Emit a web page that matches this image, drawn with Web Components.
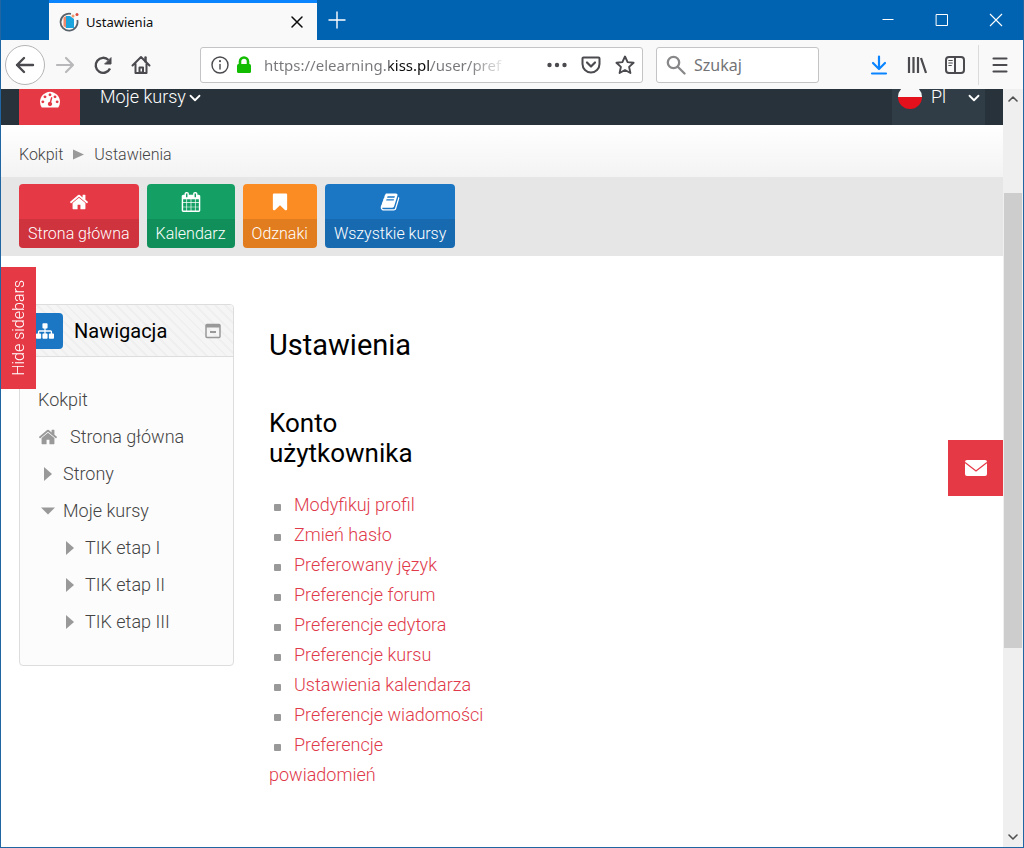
<!DOCTYPE html>
<html lang="pl">
<head>
<meta charset="utf-8">
<title>Ustawienia</title>
<style>
  html, body { margin: 0; }
  body { font-family: Roboto, "Liberation Sans", sans-serif; font-weight: 300; color: #333; }
</style>
</head>
<body>
<browser-window>
  <tab-strip slot="tabs">Ustawienia</tab-strip>
  <browser-toolbar slot="toolbar"></browser-toolbar>

  <site-header><span slot="menu">Moje kursy</span><span slot="lang">Pl</span></site-header>
  <bread-crumbs><a href="#kokpit" slot="parent">Kokpit</a>Ustawienia</bread-crumbs>
  <quick-links>
    <quick-tile icon="home" href="#home" style="--tile:#e63946">Strona główna</quick-tile>
    <quick-tile icon="calendar" href="#calendar" style="--tile:#14a065">Kalendarz</quick-tile>
    <quick-tile icon="bookmark" href="#badges" style="--tile:#fb8c23">Odznaki</quick-tile>
    <quick-tile icon="book" href="#courses" style="--tile:#1b76c4">Wszystkie kursy</quick-tile>
  </quick-links>
  <page-columns>
    <nav-block slot="side">
      <span slot="title">Nawigacja</span>
      <tree-item kind="plain">Kokpit</tree-item>
      <tree-item kind="home">Strona główna</tree-item>
      <tree-item kind="closed">Strony</tree-item>
      <tree-item kind="open">Moje kursy</tree-item>
      <tree-item kind="closed" nested>TIK etap I</tree-item>
      <tree-item kind="closed" nested>TIK etap II</tree-item>
      <tree-item kind="closed" nested>TIK etap III</tree-item>
    </nav-block>
    <settings-panel>
      <span slot="title">Ustawienia</span>
      <span slot="group">Konto użytkownika</span>
      <settings-link href="#profile">Modyfikuj profil</settings-link>
      <settings-link href="#password">Zmień hasło</settings-link>
      <settings-link href="#language">Preferowany język</settings-link>
      <settings-link href="#forum">Preferencje forum</settings-link>
      <settings-link href="#editor">Preferencje edytora</settings-link>
      <settings-link href="#course">Preferencje kursu</settings-link>
      <settings-link href="#calendar-settings">Ustawienia kalendarza</settings-link>
      <settings-link href="#messages">Preferencje wiadomości</settings-link>
      <settings-link href="#notifications">Preferencje powiadomień</settings-link>
    </settings-panel>
  </page-columns>
  <sidebar-toggle slot="overlay">Hide sidebars</sidebar-toggle>
  <mail-button slot="overlay"></mail-button>
</browser-window>

<script>
const define = (name, html, setup) => {
  const template = document.createElement('template');
  template.innerHTML = `<style>
    *, ::before, ::after { box-sizing: border-box; }
    :host { display: block; box-sizing: border-box; }
    button { border: 0; padding: 0; margin: 0; background: none; font: inherit; color: inherit; display: flex; align-items: center; justify-content: center; }
    a { color: inherit; text-decoration: none; }
    svg { display: block; flex: none; }
  </style>` + html;
  customElements.define(name, class extends HTMLElement {
    constructor() {
      super();
      this.attachShadow({ mode: 'open' }).append(template.content.cloneNode(true));
    }
    connectedCallback() { if (setup) setup(this, this.shadowRoot); }
  });
};

/* Icon set. Filled glyphs use a 1792 grid. */
const fa = d => `<svg viewBox="0 0 1792 1792" fill="currentColor"><path d="${d}"/></svg>`;
const line = (body, w = 2, box = 20) => `<svg viewBox="0 0 ${box} ${box}" fill="none" stroke="currentColor" stroke-width="${w}" stroke-linecap="round" stroke-linejoin="round">${body}</svg>`;
const ICONS = {
  home: fa('M1472 992v480q0 26-19 45t-45 19h-384v-384h-256v384h-384q-26 0-45-19t-19-45v-480q0-1 .5-3t.5-3l575-474 575 474q1 2 1 6zm223-69l-62 74q-8 9-21 11h-3q-13 0-21-7l-692-577-692 577q-12 8-24 7-13-2-21-11l-62-74q-8-10-7-23.500t11-21.500l719-599q32-26 76-26t76 26l244 204v-195q0-14 9-23t23-9h192q14 0 23 9t9 23v408l219 182q10 8 11 21.500t-7 23.500z'),
  calendar: fa('M192 1664h288v-288h-288v288zm352 0h320v-288h-320v288zm-352-352h288v-320h-288v320zm352 0h320v-320h-320v320zm-352-384h288v-288h-288v288zm736 736h320v-288h-320v288zm-384-736h320v-288h-320v288zm768 736h288v-288h-288v288zm-384-352h320v-320h-320v320zm-352-864v-288q0-13-9.500-22.500t-22.500-9.500h-64q-13 0-22.500 9.500t-9.500 22.500v288q0 13 9.500 22.500t22.500 9.500h64q13 0 22.500-9.500t9.500-22.500zm736 864h288v-320h-288v320zm-384-384h320v-288h-320v288zm384 0h288v-288h-288v288zm32-480v-288q0-13-9.500-22.500t-22.500-9.500h-64q-13 0-22.500 9.500t-9.500 22.500v288q0 13 9.500 22.500t22.500 9.500h64q13 0 22.500-9.500t9.500-22.500zm384-64v1280q0 52-38 90t-90 38h-1408q-52 0-90-38t-38-90v-1280q0-52 38-90t90-38h128v-96q0-66 47-113t113-47h64q66 0 113 47t47 113v96h384v-96q0-66 47-113t113-47h64q66 0 113 47t47 113v96h128q52 0 90 38t38 90z'),
  bookmark: fa('M1420 128q23 0 44 9 33 13 52.500 41t19.500 62v1289q0 34-19.500 62t-52.500 41q-19 8-44 8-48 0-83-32l-441-424-441 424q-36 33-83 33-23 0-44-9-33-13-52.500-41t-19.500-62v-1289q0-34 19.500-62t52.500-41q21-9 44-9h1048z'),
  book: fa('M1703 478q40 57 18 129l-275 906q-19 64-76.500 107.500t-122.500 43.500h-923q-77 0-148.500-53.500t-99.500-131.500q-24-67-2-127 0-4 3-27t4-37q1-8-3-21.500t-3-19.500q2-11 8-21t16.500-23.500 16.500-23.500q23-38 45-91.500t30-91.500q3-10 .5-30t-.5-28q3-11 17-28t17-23q21-36 42-92t25-90q1-9-2.500-32t.5-28q4-13 22-30.500t22-22.500q19-26 42.500-84.500t27.500-96.500q1-8-3-25.500t-2-26.500q2-8 9-18t18-23 17-21q8-12 16.500-30.500t15-35 16-36 19.500-32 26.500-23.500 36-11.500 47.500 5.500l-1 3q38-9 51-9h761q74 0 114 56t18 130l-274 906q-36 119-71.500 153.500t-128.500 34.500h-869q-27 0-38 15-11 16-1 43 24 70 144 70h923q29 0 56-15.500t35-41.500l300-987q7-22 5-57 38 15 59 43zm-1064 2q-4 13 2 22.500t20 9.500h608q13 0 25.500-9.500t16.500-22.500l21-64q4-13-2-22.500t-20-9.500h-608q-13 0-25.500 9.500t-16.500 22.500zm-83 256q-4 13 2 22.500t20 9.500h608q13 0 25.500-9.500t16.500-22.500l21-64q4-13-2-22.500t-20-9.500h-608q-13 0-25.500 9.500t-16.500 22.500z'),
  gauge: fa('M384 1152q0-53-37.500-90.500t-90.500-37.500-90.500 37.500-37.500 90.500 37.500 90.500 90.500 37.500 90.500-37.500 37.500-90.500zm192-448q0-53-37.500-90.500t-90.500-37.500-90.500 37.500-37.500 90.500 37.500 90.500 90.500 37.500 90.500-37.500 37.500-90.500zm428 481l101-382q6-26-7.500-48.500t-38.500-29.500-48 6.500-30 39.500l-101 382q-60 5-107 43.500t-63 98.500q-20 77 20 146t117 89 146-20 89-117q16-60-6-117t-72-91zm660-33q0-53-37.500-90.500t-90.500-37.500-90.500 37.500-37.500 90.500 37.500 90.500 90.500 37.500 90.500-37.500 37.500-90.500zm-640-640q0-53-37.500-90.500t-90.500-37.500-90.500 37.500-37.500 90.500 37.500 90.500 90.500 37.500 90.500-37.500 37.500-90.500zm448 192q0-53-37.500-90.500t-90.500-37.500-90.500 37.500-37.500 90.500 37.500 90.500 90.500 37.500 90.500-37.500 37.500-90.500zm320 448q0 261-141 483-19 29-54 29h-1402q-35 0-54-29-141-221-141-483 0-182 71-348t191-286 286-191 348-71 348 71 286 191 191 286 71 348z'),
  sitemap: fa('M1792 1248v320q0 40-28 68t-68 28h-320q-40 0-68-28t-28-68v-320q0-40 28-68t68-28h96v-192h-512v192h96q40 0 68 28t28 68v320q0 40-28 68t-68 28h-320q-40 0-68-28t-28-68v-320q0-40 28-68t68-28h96v-192h-512v192h96q40 0 68 28t28 68v320q0 40-28 68t-68 28h-320q-40 0-68-28t-28-68v-320q0-40 28-68t68-28h96v-192q0-52 38-90t90-38h512v-192h-96q-40 0-68-28t-28-68v-320q0-40 28-68t68-28h320q40 0 68 28t28 68v320q0 40-28 68t-68 28h-96v192h512q52 0 90 38t38 90v192h96q40 0 68 28t28 68z'),
  mail: '<svg viewBox="0 0 22 18"><rect y="1" width="22" height="16" rx="2" fill="#fff"/><path d="M0 3.500L11 12L22 3.500" fill="none" stroke="#e63946" stroke-width="1.300"/></svg>',
  close: line('<path d="M5 5l10 10M15 5L5 15"/>', 1.5),
  plus: line('<path d="M10 2v16M2 10h16"/>', 1.4),
  minimize: line('<path d="M4.500 9.500h11" stroke-linecap="butt"/>', 1),
  maximize: line('<path d="M4.500 4.500h11v11h-11z" stroke-linejoin="miter"/>', 1),
  exit: line('<path d="M4 4l12 12M16 4L4 16" stroke-linecap="butt"/>', 1.1),
  back: line('<path d="M18 10H2M9 3L2 10l7 7"/>', 2.4),
  forward: line('<path d="M2 10h16M11 3l7 7-7 7"/>', 2.2),
  reload: line('<path d="M17 13.500A7.500 7.500 0 1 1 15.500 5" stroke-linecap="butt"/><path d="M18 3v6h-6z" fill="currentColor" stroke-width="1"/>', 2.4),
  house: line('<path d="M1.500 10.500L10 2l8.500 8.500M4.500 9v9h11V9"/><path d="M14.500 2.500v4" stroke-width="2.500"/><path d="M8.500 17.500v-5h3.500v5z"/>', 2),
  info: line('<circle cx="10" cy="10" r="8"/><path d="M10 9.500v4.500"/><path d="M10 6v.2" stroke-width="2"/>', 1.4),
  lock: '<svg viewBox="0 0 20 20"><path d="M6 10V6.500a4 4 0 0 1 8 0V10" fill="none" stroke="#12bc00" stroke-width="2.600"/><rect x="3" y="9" width="14" height="9" rx="1.500" fill="#12bc00"/></svg>',
  dots: '<svg viewBox="0 0 20 20" fill="currentColor"><circle cx="2.500" cy="10" r="2.200"/><circle cx="10" cy="10" r="2.200"/><circle cx="17.500" cy="10" r="2.200"/></svg>',
  pocket: line('<path d="M2.500 2.500h15a1 1 0 0 1 1 1V9a8.500 8.500 0 0 1-17 0V3.500a1 1 0 0 1 1-1z"/><path d="M6 7.500l4 4 4-4" stroke-width="2.200"/>'),
  star: line('<path d="M10 1.500l2.600 5.600 6 .7-4.500 4.100 1.300 6.100L10 15l-5.400 3 1.300-6.100L1.400 7.800l6-.7z"/>', 1.9),
  search: line('<circle cx="7.500" cy="7.500" r="5.700"/><path d="M12 12l6.500 6.500"/>', 2.3),
  download: line('<path d="M10 1.500v12M4 8l6 6 6-6M3 18.500h14"/>', 2.2),
  library: line('<path d="M2 2v16M6.500 2v16M11 2v16M14 3l5 15" stroke-linecap="butt"/>', 2.2),
  sidebar: line('<rect x="1" y="2" width="18" height="16" rx="3"/><path d="M10 2v16"/><path d="M3.800 5.500h3.500M3.800 8h3.500M3.800 10.500h2.500" stroke-width="1.100"/>'),
  menu: line('<path d="M3.500 3.500h13M3.500 10h13M3.500 16.500h13"/>', 2.1),
  down: line('<path d="M5 7.500l5 5 5-5"/>', 2),
  up: line('<path d="M5 12.500l5-5 5 5"/>', 2),
  right: '<svg viewBox="0 0 20 20" fill="currentColor"><path d="M6 3l8 7-8 7z"/></svg>',
  expanded: '<svg viewBox="0 0 20 20" fill="currentColor"><path d="M3 6.500h14L10 13.500z"/></svg>',
  crumb: '<svg viewBox="0 0 20 20" fill="currentColor"><path d="M0 1l20 9-20 9z"/></svg>',
  collapse: '<svg viewBox="0 0 16 16" fill="none" stroke="currentColor"><rect x="1" y="1.500" width="14" height="13" rx="1" stroke-width="1.500"/><path d="M1 3h14" stroke-width="3"/><path d="M5 9h6" stroke-width="1.800"/></svg>',
  flag: '<svg viewBox="0 4 24 20"><path d="M0 12a12 12 0 0 1 24 0z" fill="#f8f8f8"/><path d="M0 12a12 12 0 0 0 24 0z" fill="#e4101c"/></svg>',
  favicon: '<svg viewBox="0 0 20 20"><path d="M12 1.800A8.500 8.500 0 1 0 18.300 8" fill="none" stroke="#59616b" stroke-width="1.800"/><path d="M4.500 5.500l3-1.500v12l-3-2z" fill="#ef8a6c"/><path d="M7 4h4l4 3v9H7z" fill="#1ba4dd"/><circle cx="14" cy="4" r="1.500" fill="#f09a70"/><circle cx="18" cy="2.500" r="1.500" fill="#dd4c3c"/></svg>'
};
define('ui-icon', '<style>:host{width:20px;height:20px;flex:none}svg{width:100%;height:100%}</style>', (host, root) => {
  if (!root.querySelector('svg')) root.append(document.createRange().createContextualFragment(ICONS[host.getAttribute('name')]));
});

define('browser-window', `<style>
  :host { min-height: 100vh; display: flex; flex-direction: column; background: #fff; border: solid #1f66a3; border-width: 0 1px 1px; }
  .view { flex: 1; display: grid; grid-template-columns: 1fr 20px; }
  main { position: relative; min-width: 0; }
</style>
<slot name="tabs"></slot><slot name="toolbar"></slot>
<div class="view"><main><slot></slot><slot name="overlay"></slot></main><scroll-rail></scroll-rail></div>`);

define('tab-strip', `<style>
  :host { display: flex; height: 40px; background: #0063b1; color: #fff; font-family: "Noto Sans", "Open Sans", sans-serif; font-weight: 400; padding-left: 48px; }
  .tab { width: 268px; background: #f9f9fa; border-top: 3px solid #0a84ff; color: #0c0c0d; display: flex; align-items: center; gap: 7px; padding: 0 10px; font-size: 13px; }
  .label { flex: 1; }
  .new { width: 40px; }
  .window { margin-left: auto; display: flex; }
  .window button { width: 54px; }
</style>
<div class="tab"><ui-icon name="favicon"></ui-icon><span class="label"><slot></slot></span><button aria-label="Zamknij kartę"><ui-icon name="close"></ui-icon></button></div>
<button class="new" aria-label="Nowa karta"><ui-icon name="plus"></ui-icon></button>
<div class="window"><button aria-label="Minimalizuj"><ui-icon name="minimize"></ui-icon></button><button aria-label="Maksymalizuj"><ui-icon name="maximize"></ui-icon></button><button aria-label="Zamknij"><ui-icon name="exit"></ui-icon></button></div>`);

define('browser-toolbar', `<style>
  :host { display: flex; align-items: center; height: 49px; padding: 0 2px 0 4px; background: #f9f9fa; color: #4a4a4f; font-family: "Noto Sans", "Open Sans", sans-serif; font-weight: 400; }
  button { width: 38px; height: 40px; }
  .back { width: 40px; margin-right: 1px; border: 1px solid #b5b5b8; border-radius: 50%; background: #fff; }
  .forward { color: #b8b8ba; }
  .box { display: flex; align-items: center; height: 36px; background: #fff; border: 1px solid #c4c4c6; border-radius: 3px; }
  .url { flex: 1; margin: 0 13px 0 40px; padding: 0 0 0 9px; min-width: 0; }
  .url button { width: 34px; height: 34px; }
  .url > ui-icon { margin-right: 4px; }
  input { border: 0; outline: 0; padding: 0; font: inherit; font-size: 16px; min-width: 0; background: none; }
  .url input { flex: 1; margin: 0 36px 0 6px; font-size: 15px; color: transparent; -webkit-background-clip: text; background-clip: text;
    background-image: linear-gradient(90deg, #77777b 125px, #0c0c0d 125px, #0c0c0d 167px, #77777b 167px, #77777b 205px, transparent 244px); }
  .search { width: 163px; padding: 0 9px; gap: 8px; }
  .search ui-icon { color: #88888a; }
  .search input { flex: 1; width: 20px; }
  .search input::placeholder { color: #737376; opacity: 1; }
  .end { display: flex; margin-left: 41px; }
  .blue { color: #0a84ff; }
  .menu { width: 43px; border-left: 1px solid #dcdcde; margin-left: 4px; }
</style>
<button class="back" aria-label="Wstecz"><ui-icon name="back"></ui-icon></button>
<button class="forward" aria-label="Naprzód"><ui-icon name="forward"></ui-icon></button>
<button aria-label="Odśwież"><ui-icon name="reload"></ui-icon></button>
<button aria-label="Strona startowa"><ui-icon name="house"></ui-icon></button>
<div class="box url"><ui-icon name="info"></ui-icon><ui-icon name="lock"></ui-icon><input aria-label="Adres" value="https://elearning.kiss.pl/user/pref">
<button aria-label="Więcej"><ui-icon name="dots"></ui-icon></button><button aria-label="Pocket"><ui-icon name="pocket"></ui-icon></button><button aria-label="Zakładka"><ui-icon name="star"></ui-icon></button></div>
<div class="box search"><ui-icon name="search"></ui-icon><input type="text" aria-label="Szukaj" placeholder="Szukaj"></div>
<div class="end"><button class="blue" aria-label="Pobrane"><ui-icon name="download"></ui-icon></button><button aria-label="Biblioteka"><ui-icon name="library"></ui-icon></button><button aria-label="Panel boczny"><ui-icon name="sidebar"></ui-icon></button><button class="menu" aria-label="Menu"><ui-icon name="menu"></ui-icon></button></div>`);

/* The bar is scrolled partly out of view, so its row sits against the top edge. */
define('site-header', `<style>
  :host { display: flex; height: 36px; background: #27323a; color: #fff; padding: 0 18px; font-size: 18px; line-height: 16px; }
  .item { display: flex; align-items: flex-start; height: 36px; }
  .dash { width: 61px; background: #e63946; justify-content: center; margin-right: 20px; }
  .item ui-icon[name=down] { width: 18px; height: 18px; }
  .lang { margin-left: auto; width: 93px; background: #303d46; padding: 0 2px 0 6px; gap: 9px; justify-content: flex-start; }
  .lang ui-icon[name=flag] { width: 24px; height: 20px; }
  .lang ui-icon[name=down] { margin-left: auto; }
</style>
<a class="item dash" href="#dashboard" aria-label="Kokpit"><ui-icon name="gauge"></ui-icon></a>
<button class="item"><slot name="menu"></slot><ui-icon name="down"></ui-icon></button>
<button class="item lang"><ui-icon name="flag"></ui-icon><slot name="lang"></slot><ui-icon name="down"></ui-icon></button>`);

define('bread-crumbs', `<style>
  :host { height: 52px; background: linear-gradient(#fff, #f3f3f3); font-size: 16px; color: #444; }
  nav { display: flex; align-items: center; gap: 10px; height: 100%; padding: 6px 18px 0; }
  ui-icon { width: 11px; height: 11px; color: #999; }
  ::slotted(a) { color: inherit; text-decoration: none; }
</style><nav><slot name="parent"></slot><ui-icon name="crumb"></ui-icon><span><slot></slot></span></nav>`);

define('quick-links', `<style>
  :host { display: flex; flex-wrap: wrap; gap: 8px; padding: 7px 18px 8px; background: #e6e6e6; }
</style><slot></slot>`);

define('quick-tile', `<style>
  a { display: block; background: var(--tile); color: #fff; border-radius: 4px; overflow: hidden; font-size: 16px; text-align: center; }
  .top { height: 35px; display: flex; align-items: center; justify-content: center; }
  .label { display: block; height: 29px; line-height: 29px; padding: 0 9px; background: rgba(0,0,0,.1); white-space: nowrap; }
</style><a><span class="top"><ui-icon></ui-icon></span><span class="label"><slot></slot></span></a>`, (host, root) => {
  root.querySelector('a').href = host.getAttribute('href');
  const icon = root.querySelector('ui-icon');
  if (!icon.hasAttribute('name')) {
    const fresh = document.createElement('ui-icon');
    fresh.setAttribute('name', host.getAttribute('icon'));
    icon.replaceWith(fresh);
  }
});

define('page-columns', `<style>
  :host { display: grid; grid-template-columns: 215px 1fr; gap: 35px; padding: 48px 18px; align-items: start; }
</style><slot name="side"></slot><slot></slot>`);

define('nav-block', `<style>
  :host { border: 1px solid #ddd; border-radius: 4px; background: #fcfcfc; overflow: hidden; }
  header { display: flex; align-items: center; height: 52px; padding: 0 12px 0 7px; border-bottom: 1px solid #ddd; color: #000;
    background: repeating-linear-gradient(45deg, #f5f5f5 0 5px, #efefef 5px 7px); }
  .badge { width: 36px; height: 36px; border-radius: 4px; background: #1b76c4; color: #fff; display: flex; align-items: center; justify-content: center; margin-right: 11px; }
  .badge ui-icon { width: 18px; height: 18px; }
  h2 { margin: 0; flex: 1; font-size: 20px; font-weight: 400; }
  button { color: #999; }
  button ui-icon { width: 16px; height: 16px; }
  .tree { padding: 24px 18px 25px; }
</style>
<header><span class="badge"><ui-icon name="sitemap"></ui-icon></span><h2><slot name="title"></slot></h2><button aria-label="Zwiń blok"><ui-icon name="collapse"></ui-icon></button></header>
<div class="tree"><slot></slot></div>`);

define('tree-item', `<style>
  a { display: flex; align-items: center; height: 37px; font-size: 18px; color: #444; }
  .mark { display: none; width: 20px; color: #999; margin-right: 5px; }
  ui-icon { display: none; }
  :host([nested]) { padding-left: 22px; }
  :host([kind=home]) .mark, :host([kind=open]) .mark, :host([kind=closed]) .mark { display: block; }
  :host([kind=home]) .mark { margin-right: 12px; }
  :host([kind=home]) [name=home], :host([kind=open]) [name=expanded], :host([kind=closed]) [name=right] { display: block; }
</style><a href="#node"><span class="mark"><ui-icon name="home"></ui-icon><ui-icon name="expanded"></ui-icon><ui-icon name="right"></ui-icon></span><slot></slot></a>`);

define('settings-panel', `<style>
  h1, h2 { margin: 0; color: #000; font-weight: 400; }
  h1 { font-size: 29px; line-height: 34px; padding: 24px 0 46px; }
  h2 { font-size: 26px; line-height: 30px; padding-bottom: 22px; }
  section { width: 216px; }
</style><h1><slot name="title"></slot></h1><section><h2><slot name="group"></slot></h2><div role="list"><slot></slot></div></section>`);

define('settings-link', `<style>
  :host { font-size: 18px; line-height: 30px; }
  :host::before { content: ""; display: inline-block; width: 7px; height: 7px; border-radius: 1px; background: #999; margin: 0 13px 0 5px; }
  a { color: #e0394a; }
</style><a><slot></slot></a>`, (host, root) => {
  host.setAttribute('role', 'listitem');
  root.querySelector('a').href = host.getAttribute('href');
});

define('sidebar-toggle', `<style>
  :host { position: absolute; left: 0; top: 178px; }
  button { width: 35px; height: 122px; background: #e63946; color: #fff; font-size: 16px; }
  span { writing-mode: vertical-rl; transform: rotate(180deg); white-space: nowrap; }
</style><button><span><slot></slot></span></button>`);

define('mail-button', `<style>
  :host { position: absolute; right: 0; top: 351px; }
  button { width: 55px; height: 56px; background: #e63946; }
  ui-icon { width: 22px; height: 18px; }
</style><button aria-label="Wiadomości"><ui-icon name="mail"></ui-icon></button>`);

define('scroll-rail', `<style>
  :host { display: grid; grid-template-rows: 104fr 455fr 199fr; background: #efefef; color: #505050; justify-items: center; }
  ui-icon { width: 16px; height: 16px; }
  .thumb { background: #cdcdcd; width: 18px; }
  .up { align-self: start; padding-top: 2px; }
  .down { align-self: end; padding-bottom: 2px; }
</style><div class="up"><ui-icon name="up"></ui-icon></div><div class="thumb"></div><div class="down"><ui-icon name="down"></ui-icon></div>`);
</script>
</body>
</html>
